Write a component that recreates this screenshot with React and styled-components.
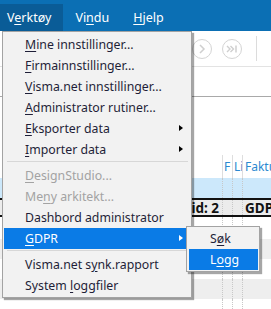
import React from "react";
import styled, { createGlobalStyle } from "styled-components";

const GlobalStyle = createGlobalStyle`
  html, body { margin: 0; padding: 0; background: #ffffff; }
  body { font-family: "Noto Sans", "Open Sans", sans-serif; overflow: hidden; }
  #root { width: 271px; height: 309px; }
`;

const Page = styled.div`
  position: relative;
  width: 271px;
  height: 309px;
  overflow: hidden;
  background: #ffffff;
  font-size: 12px;
`;

const MenuBar = styled.div`
  height: 31px;
  background: #0b6fb4;
  display: flex;
  align-items: flex-end;
  gap: 5px;
`;

const BarItem = styled.div`
  height: 27px;
  line-height: 27px;
  padding: 0 12px 0 7px;
  color: #ffffff;
  font-size: 12.5px;
  background: ${(p) => (p.$open ? "#0a5c97" : "transparent")};
  u { text-decoration-thickness: 1px; text-underline-offset: 2px; }
`;

const Toolbar = styled.div`
  height: 35px;
  border-bottom: 1px solid #e3e3e3;
  display: flex;
  align-items: center;
  padding-left: 192px;
  gap: 10px;
`;

const CircleBtn = styled.div`
  flex: none;
  width: 20px;
  height: 20px;
  border-radius: 50%;
  border: 1.5px solid #d4d4d4;
  box-sizing: border-box;
  display: flex;
  align-items: center;
  justify-content: center;
`;

const ToolSep = styled.div`
  flex: none;
  width: 1px;
  height: 25px;
  background: #dcdcdc;
  margin: 0 4px;
`;

const Spacer = styled.div`
  height: 29px;
  border-bottom: 1px solid #a9a9a9;
`;

const GroupArea = styled.div`
  height: 58px;
`;

const Row = styled.div`
  display: grid;
  grid-template-columns: 223px 10px 10px 1fr;
  height: ${(p) => p.$h}px;
  background: ${(p) => p.$bg || "#ffffff"};
  border-top: ${(p) => (p.$dark ? "2px solid #111" : "none")};
  border-bottom: ${(p) => (p.$dark ? "2px solid #111" : "none")};
  font-weight: ${(p) => (p.$bold ? 700 : 400)};
  font-size: ${(p) => (p.$bold ? "13.5px" : "12px")};
  color: ${(p) => (p.$head ? "#2b88d0" : "#111")};
`;

const Cell = styled.div`
  border-right: 1px ${(p) => (p.$solid ? "solid #dedede" : "dotted #c8c8c8")};
  padding-left: ${(p) => (p.$solid ? "1px" : "2px")};
  display: flex;
  align-items: center;
  white-space: nowrap;
  overflow: hidden;
  justify-content: ${(p) => (p.$end ? "flex-end" : "flex-start")};
  padding-right: ${(p) => (p.$end ? "3px" : "0")};
  &:last-child { border-right: none; }
`;

const Menu = styled.div`
  position: absolute;
  left: 2px;
  top: 31px;
  width: 188px;
  padding: 2px 0 1px;
  background: #f2f2f2;
  border: 1px solid #a3a3a3;
  box-shadow: 2px 2px 1px rgba(0, 0, 0, 0.35);
  font-size: 12.3px;
  z-index: 2;
`;

const Item = styled.div`
  position: relative;
  height: 21px;
  margin: 0 1px;
  padding-left: 21px;
  display: flex;
  align-items: center;
  color: ${(p) => (p.$active ? "#ffffff" : p.$disabled ? "#a3a3a3" : "#1f1f38")};
  background: ${(p) => (p.$active ? "#0a7be6" : "transparent")};
  white-space: nowrap;
  u { text-decoration-thickness: 1px; text-underline-offset: 2px; }
`;

const Label = styled.span`
  white-space: pre;
`;

const Arrow = styled.span`
  position: absolute;
  right: 7px;
  top: 7px;
  width: 0;
  height: 0;
  border-top: 3.5px solid transparent;
  border-bottom: 3.5px solid transparent;
  border-left: 4px solid ${(p) => (p.$light ? "#ffffff" : "#000000")};
`;

const Separator = styled.div`
  height: 5px;
  display: flex;
  align-items: flex-start;
  padding: 1px 3px 0 4px;
  box-sizing: border-box;
  &::before {
    content: "";
    flex: 1;
    height: 1px;
    background: #d7d7d7;
  }
`;

const SubMenu = styled.div`
  position: absolute;
  left: 186px;
  top: 226px;
  width: 72px;
  padding: 1px 0;
  background: #f2f2f2;
  border: 1px solid #a3a3a3;
  box-shadow: 2px 2px 1px rgba(0, 0, 0, 0.35);
  font-size: 12.3px;
  z-index: 3;
`;

const SubItem = styled(Item)`
  margin: 0 1px 0 2px;
`;

const M = ({ children }) => <u>{children}</u>;

const MenuEntry = ({ children, arrow, ...rest }) => (
  <Item {...rest}>
    <Label>{children}</Label>
    {arrow && <Arrow $light={rest.$active} />}
  </Item>
);

const GridRow = ({ h, bg, cells = ["", "", "", ""], ...rest }) => (
  <Row $h={h} $bg={bg} {...rest}>
    {cells.map((c, i) => (
      <Cell key={i}>{c}</Cell>
    ))}
  </Row>
);

export default function App() {
  return (
    <Page>
      <GlobalStyle />
      <MenuBar>
        <BarItem $open>
          V<M>e</M>rktøy
        </BarItem>
        <BarItem>
          Vi<M>n</M>du
        </BarItem>
        <BarItem>
          <M>H</M>jelp
        </BarItem>
      </MenuBar>
      <Toolbar>
        <CircleBtn>
          <svg width="8" height="10" viewBox="0 0 8 10">
            <path d="M2 1 L6 5 L2 9" fill="none" stroke="#cfcfcf" strokeWidth="1.5" />
          </svg>
        </CircleBtn>
        <CircleBtn>
          <svg width="12" height="10" viewBox="0 0 12 10">
            <path d="M1 2 L4 5 L1 8 M4.5 2 L7.5 5 L4.5 8" fill="none" stroke="#cfcfcf" strokeWidth="1.4" />
            <path d="M10 1.5 V8.5" stroke="#cfcfcf" strokeWidth="1.5" />
          </svg>
        </CircleBtn>
        <ToolSep />
        <CircleBtn />
      </Toolbar>
      <Spacer />
      <GroupArea />
      <Row $h={23} $head>
        <Cell $solid />
        <Cell $solid>F</Cell>
        <Cell $solid>Li</Cell>
        <Cell>Faktura</Cell>
      </Row>
      <GridRow h={20} bg="#cce8fb" />
      <Row $h={15} $bg="#ececec" $dark $bold>
        <Cell $end>Gruppe id: 2</Cell>
        <Cell />
        <Cell />
        <Cell>GDPR</Cell>
      </Row>
      <GridRow h={22} />
      <GridRow h={20} bg="#eeeeee" />
      <GridRow h={20} />
      <GridRow h={20} bg="#eeeeee" />
      <GridRow h={20} />

      <Menu>
        <MenuEntry>
          <M>M</M>ine innstillinger...
        </MenuEntry>
        <MenuEntry>
          <M>F</M>irmainnstillinger...
        </MenuEntry>
        <MenuEntry>
          <M>V</M>isma.net innstillinger...
        </MenuEntry>
        <MenuEntry>
          <M>A</M>dministrator rutiner...
        </MenuEntry>
        <MenuEntry arrow>
          <M>E</M>ksporter data
        </MenuEntry>
        <MenuEntry arrow>
          <M>I</M>mporter data
        </MenuEntry>
        <Separator />
        <MenuEntry $disabled>
          <M>D</M>esignStudio...
        </MenuEntry>
        <MenuEntry $disabled>
          Me<M>n</M>y arkitekt...
        </MenuEntry>
        <MenuEntry>Dashbord administrator</MenuEntry>
        <MenuEntry $active arrow>
          <M>G</M>DPR
        </MenuEntry>
        <Separator />
        <MenuEntry>
          Visma.net s<M>y</M>nk.rapport
        </MenuEntry>
        <MenuEntry>
          {"System "}
          <M>l</M>oggfiler
        </MenuEntry>
      </Menu>
      <SubMenu>
        <SubItem>
          <Label>
            S<M>ø</M>k
          </Label>
        </SubItem>
        <SubItem $active>
          <Label>
            L<M>o</M>gg
          </Label>
        </SubItem>
      </SubMenu>
    </Page>
  );
}
